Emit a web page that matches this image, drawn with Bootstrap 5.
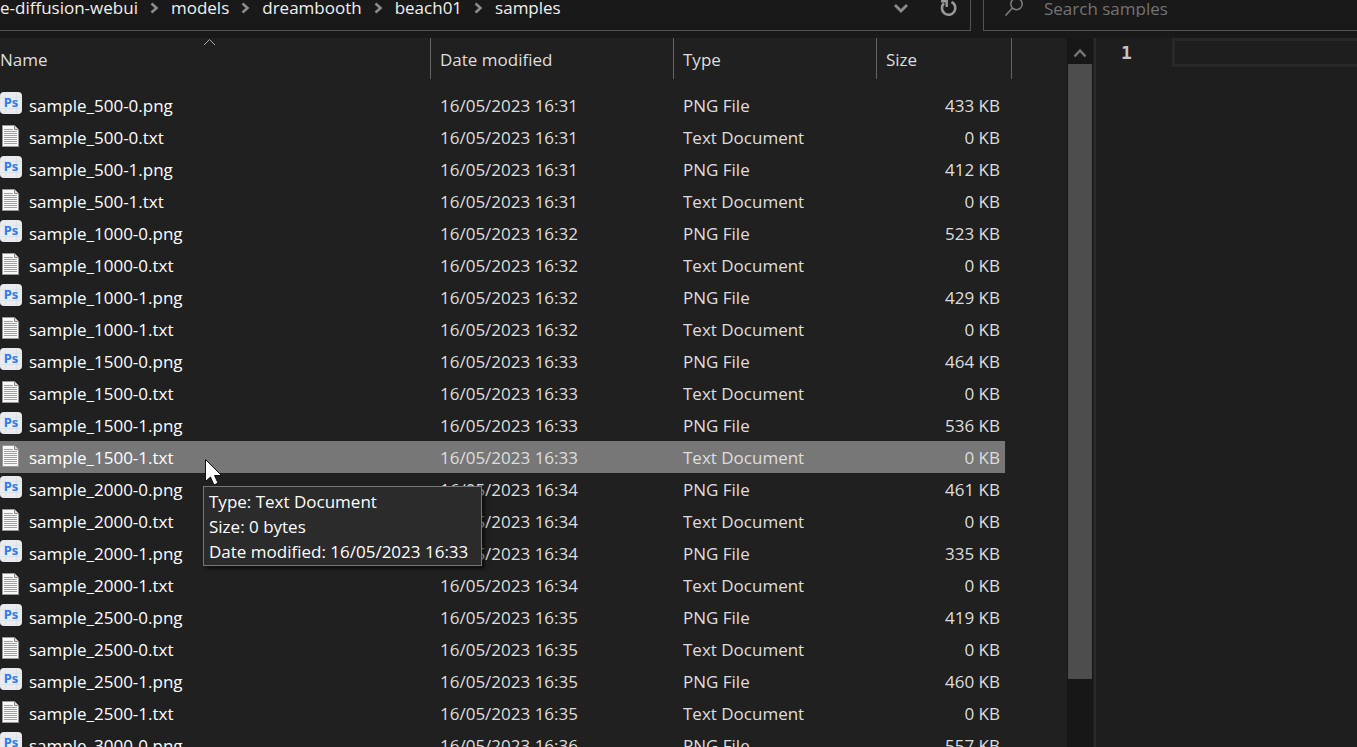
<!DOCTYPE html>
<html lang="en">
<head>
<meta charset="utf-8">
<meta name="viewport" content="width=device-width, initial-scale=1">
<title>samples</title>
<link href="https://cdn.jsdelivr.net/npm/bootstrap@5.3.0/dist/css/bootstrap.min.css" rel="stylesheet">
<style>
  body { background: #202020; color: #fff; font: 17px/24px "Open Sans", "Noto Sans", sans-serif; }

  /* address and search bar */
  .topbar { background: #191919; height: 38px; gap: 12px; }
  .address-box { height: 31px; border: solid #535353; border-width: 0 1px 1px 0; }
  .crumbs { height: 16px; }
  .crumbs a { color: #f0f0f0; }
  .crumbs li + li { display: flex; align-items: center; }
  .crumbs svg { margin: 0 12px; }
  .recent { margin-right: 25px; }
  .refresh { margin-right: 11px; }
  .search-box { width: 374px; height: 31px; border: solid #535353; border-width: 0 0 1px 1px; }
  .search-box svg { margin-left: 20px; }
  .search-box input { height: 17px; margin-left: 20px; color: #ccc; line-height: 17px; outline: 0; }
  .search-box input::placeholder { color: #737373; opacity: 1; }

  /* file list */
  .file-pane { padding-right: 55px; }
  .files { table-layout: fixed; border-collapse: separate; border-spacing: 0; color: #dedede; }
  .files th { height: 41px; padding: 2px 9px 0; font-weight: 400; border-right: 1px solid #636363; }
  .files th:first-child { padding-left: 0; }
  .files thead::after { content: ""; display: block; height: 10px; }
  .files td { height: 32px; padding: 1px 9px 0; white-space: nowrap; }
  .files td:first-child { padding-left: 0; color: #fff; }
  .files td:last-child { padding-right: 5px; text-align: right; border-right: 7px solid transparent; background-clip: padding-box; }
  .files .picked td { background-color: #777; }
  .col-date { width: 243px; }
  .col-type { width: 203px; }
  .col-size { width: 135px; }
  .sort-mark { position: absolute; top: 0; left: 203px; }
  .file-icon { width: 29px; height: 27px; }
  .sheet-icon { margin: 1px 0 0 2px; }
  .info-tip { position: absolute; z-index: 2; top: 45px; left: 203px; width: 279px; padding: 2px 5px 1px; background: #2b2b2b; border: 1px solid #767676; box-shadow: 3px 3px 3px #0008; line-height: 25px; }
  .pointer { position: absolute; z-index: 3; top: 17px; left: 204px; }

  /* scroll bar and editor */
  .scroller { width: 26px; background: #171717; padding: 0 1px; }
  .scroller button { height: 26px; padding: 3px 0 0; }
  .thumb { height: 90%; background: #4d4d4d; }
  .editor { width: 264px; border-left: 1px solid #202020; background: #1e1e1e; }
  .gutter { width: 78px; border-left: 2px solid #2b2b2b; color: #c6c6c6; font: bold 18px/29px "DejaVu Sans Mono", monospace; padding-left: 25px; }
  .code-line { height: 29px; min-width: 0; background: #1e1e1e; border: 3px solid #282828; border-right: 0; color: #ddd; outline: 0; font: 18px/23px "DejaVu Sans Mono", monospace; }
</style>
</head>
<body class="vh-100 overflow-hidden d-flex flex-column">

<svg class="d-none">
  <symbol id="ps" viewBox="0 0 22 22">
    <rect width="22" height="22" rx="4" fill="#e9ebee"/>
    <path d="M0 5.500h22M0 16.500h22M5.500 0v22M16.500 0v22" stroke="#dce2ea" fill="none"/>
  </symbol>
  <symbol id="txt" viewBox="0 0 17 22">
    <path d="M.5 .5h12l4 4v17H.5z" fill="#f8f8f8" stroke="#999"/>
    <path d="M12.500 .5v4h4" fill="#ddd" stroke="#888"/>
    <path d="M2 4.500h9M2 6.500h13M2 8.500h13M2 10.500h13M2 12.500h13M2 14.500h13M2 16.500h13M2 18.500h13" stroke="#a2a2a2"/>
  </symbol>
  <symbol id="chev" viewBox="0 0 9 12"><path d="M1.500 1.500L6.500 6l-5 4.500" fill="none" stroke="#8c8c8c" stroke-width="2.600"/></symbol>
</svg>

<header class="topbar d-flex flex-shrink-0">
  <nav class="address-box flex-grow-1 d-flex align-items-start" aria-label="Address">
    <ol class="crumbs list-unstyled d-flex align-items-center flex-grow-1 m-0">
      <li><a class="text-decoration-none" href="#">e-diffusion-webui</a></li>
      <li><svg width="9" height="12"><use href="#chev"/></svg><a class="text-decoration-none" href="#">models</a></li>
      <li><svg width="9" height="12"><use href="#chev"/></svg><a class="text-decoration-none" href="#">dreambooth</a></li>
      <li><svg width="9" height="12"><use href="#chev"/></svg><a class="text-decoration-none" href="#">beach01</a></li>
      <li><svg width="9" height="12"><use href="#chev"/></svg><a class="text-decoration-none" href="#" aria-current="page">samples</a></li>
    </ol>
    <button class="recent border-0 bg-transparent p-0 d-flex" aria-label="Previous locations"><svg width="22" height="17" viewBox="0 0 22 17"><path d="M5 5l6 6 6-6" fill="none" stroke="#8c8c8c" stroke-width="2.800"/></svg></button>
    <button class="refresh border-0 bg-transparent p-0 d-flex" aria-label="Refresh"><svg width="22" height="18" viewBox="0 0 22 18" fill="none" stroke="#999" stroke-width="2.600"><path d="M14.500 2A6.700 6.700 0 1 1 7 3.200"/><path d="M4 1.200h5.700V7" stroke-width="2.400"/></svg></button>
  </nav>
  <form class="search-box d-flex align-items-start">
    <svg class="flex-shrink-0" width="20" height="17" viewBox="0 0 20 17" fill="none" stroke="#808080" stroke-width="1.500"><circle cx="12.500" cy="4" r="5.700"/><path d="M8.500 8l-7 7.500"/></svg>
    <input class="flex-grow-1 border-0 bg-transparent p-0" type="search" placeholder="Search samples" aria-label="Search samples">
  </form>
</header>

<main class="d-flex flex-grow-1 overflow-hidden">
  <section class="file-pane flex-grow-1 overflow-hidden" aria-label="Files">
    <table class="files w-100">
      <colgroup><col><col class="col-date"><col class="col-type"><col class="col-size"></colgroup>
      <thead>
        <tr>
          <th class="position-relative" scope="col">Name<svg class="sort-mark" width="13" height="8" viewBox="0 0 13 8"><path d="M1 7l5.500-5.500L12 7" fill="none" stroke="#aaa"/></svg></th>
          <th scope="col">Date modified</th>
          <th scope="col">Type</th>
          <th scope="col">Size</th>
        </tr>
      </thead>
      <tbody id="rows"></tbody>
    </table>
  </section>
  <div class="scroller d-flex flex-column flex-shrink-0">
    <button class="border-0 bg-transparent flex-shrink-0 d-flex align-items-center justify-content-center" aria-label="Scroll up"><svg width="14" height="12" viewBox="0 0 14 12"><path d="M1.500 9.500L7 3.500l5.500 6" fill="none" stroke="#777" stroke-width="2.400"/></svg></button>
    <div class="flex-grow-1"><div class="thumb"></div></div>
  </div>
  <section class="editor d-flex align-items-start flex-shrink-0" aria-label="Editor">
    <label class="gutter flex-shrink-0 align-self-stretch" for="line1">1</label>
    <input class="code-line flex-grow-1 p-0" id="line1" type="text">
  </section>
</main>

<script>
  // name, modified time, size in KB; every image has an empty caption file beside it
  const files = [
    ["500-0", "16:31", 433], ["500-1", "16:31", 412],
    ["1000-0", "16:32", 523], ["1000-1", "16:32", 429],
    ["1500-0", "16:33", 464], ["1500-1", "16:33", 536],
    ["2000-0", "16:34", 461], ["2000-1", "16:34", 335],
    ["2500-0", "16:35", 419], ["2500-1", "16:35", 460],
    ["3000-0", "16:36", 557]
  ];
  const psIcon = '<svg width="22" height="22" viewBox="0 0 22 22"><use href="#ps"/><text x="11" y="15" text-anchor="middle" font-size="13" font-family="Noto Sans" font-weight="700" fill="#2b7de9">Ps</text></svg>';
  const txtIcon = '<svg class="sheet-icon" width="17" height="22"><use href="#txt"/></svg>';
  const tip = '<svg class="pointer" width="20" height="28" viewBox="0 0 20 28"><path d="M1.500 1.500v22l5-4.500 3.500 8 4-2-3.500-7.500h7z" fill="#fff" stroke="#111"/></svg>' +
    '<div class="info-tip" role="tooltip">Type: Text Document<br>Size: 0 bytes<br>Date modified: 16/05/2023 16:33</div>';
  const row = (name, time, type, size, icon, picked) =>
    `<tr class="${picked ? "picked" : ""}"><td class="${picked ? "position-relative" : ""}"><div class="d-flex align-items-center"><span class="file-icon flex-shrink-0 d-flex align-items-start">${icon}</span>${name}</div>${picked ? tip : ""}</td>` +
    `<td>16/05/2023 ${time}</td><td>${type}</td><td>${size} KB</td></tr>`;
  document.getElementById("rows").innerHTML = files.map(([id, time, kb]) =>
    row(`sample_${id}.png`, time, "PNG File", kb, psIcon, false) +
    row(`sample_${id}.txt`, time, "Text Document", 0, txtIcon, id === "1500-1")
  ).join("");
</script>
<script src="https://cdn.jsdelivr.net/npm/bootstrap@5.3.0/dist/js/bootstrap.bundle.min.js"></script>
</body>
</html>
